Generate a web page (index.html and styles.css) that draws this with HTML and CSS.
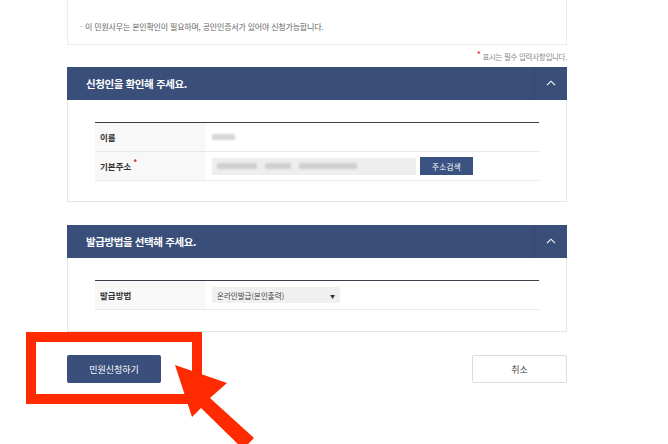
FILE: index.html
```html
<!DOCTYPE html>
<html lang="ko">
<head>
<meta charset="utf-8">
<link rel="stylesheet" href="styles.css">
</head>
<body>
<div class="page">
  <div class="notice"><span class="dot">·</span> 이 민원사무는 본인확인이 필요하며, 공인인증서가 있어야 신청가능합니다.</div>
  <div class="req"><span class="star">*</span> 표시는 필수 입력사항입니다.</div>

  <section class="panel">
    <div class="panel-head">
      <h2 class="panel-title">신청인을 확인해 주세요.</h2>
      <div class="toggle"><svg width="10" height="6" viewBox="0 0 10 6"><path d="M1 5.2 L5 1.2 L9 5.2" fill="none" stroke="#ffffff" stroke-width="1.1"/></svg></div>
    </div>
    <div class="panel-body">
      <div class="tbl">
        <div class="row">
          <div class="th">이름</div>
          <div class="td"><span class="blur blur-name"></span></div>
        </div>
        <div class="row">
          <div class="th">기본주소<span class="sup">*</span></div>
          <div class="td">
            <div class="addr">
              <span class="blur b1"></span><span class="blur b2"></span><span class="blur b3"></span>
            </div>
            <button class="btn-search">주소검색</button>
          </div>
        </div>
      </div>
    </div>
  </section>

  <section class="panel panel2">
    <div class="panel-head">
      <h2 class="panel-title">발급방법을 선택해 주세요.</h2>
      <div class="toggle"><svg width="10" height="6" viewBox="0 0 10 6"><path d="M1 5.2 L5 1.2 L9 5.2" fill="none" stroke="#ffffff" stroke-width="1.1"/></svg></div>
    </div>
    <div class="panel-body">
      <div class="tbl">
        <div class="row">
          <div class="th">발급방법</div>
          <div class="td">
            <div class="select"><span>온라인발급(본인출력)</span><span class="caret">▼</span></div>
          </div>
        </div>
      </div>
    </div>
  </section>

  <div class="actions">
    <button class="btn-apply">민원신청하기</button>
    <button class="btn-cancel">취소</button>
  </div>
</div>

<div class="highlight"></div>
<svg class="arrow" width="100" height="90" viewBox="0 0 100 90">
  <polygon points="5,5 57,23 40,38 84,78 73,89 31,48 22,57" fill="#ff2a00"/>
</svg>
</body>
</html>
```

FILE: styles.css
```css
* { box-sizing: border-box; }
html, body { margin: 0; padding: 0; background: #ffffff; }
body {
  font-family: "Noto Sans CJK KR", "Noto Sans", sans-serif;
  color: #333;
  width: 668px;
  height: 444px;
  overflow: hidden;
  position: relative;
}
.page {
  margin-left: 67px;
  width: 500px;
}
.notice {
  height: 45px;
  border: 1px solid #ececec;
  border-top: none;
  padding: 20px 0 0 12px;
  font-size: 8px;
  line-height: 14px;
  color: #666;
  letter-spacing: -0.2px;
}
.notice .dot { color: #aaa; margin-right: 1px; }
.req {
  text-align: right;
  font-size: 7.5px;
  line-height: 12px;
  color: #888;
  margin-top: 6px;
  height: 16px;
  letter-spacing: -0.3px;
}
.req .star { color: #d8182a; font-size: 9px; position: relative; top: -2px; }

.panel-head {
  height: 33px;
  background: #394e78;
  display: flex;
  align-items: center;
  justify-content: space-between;
}
.panel-title {
  margin: 0;
  padding-left: 19px;
  font-size: 10.5px;
  font-weight: 700;
  color: #ffffff;
  letter-spacing: -0.4px;
}
.toggle {
  width: 33px;
  height: 33px;
  border-left: 1px solid #34486f;
  display: flex;
  align-items: center;
  justify-content: center;
}
.toggle svg { display: block; margin-top: -1px; }
.panel-body {
  border: 1px solid #e6e6e6;
  border-top: none;
  padding: 22px 27px 20px 27px;
}
.panel2 { margin-top: 23px; }
.panel2 .panel-body { padding-bottom: 21px; }

.tbl { border-top: 1px solid #3a3f4a; }
.row {
  display: flex;
  height: 29px;
  border-bottom: 1px solid #e9e9e9;
}
.th {
  width: 111px;
  background: #f8f8f8;
  padding-left: 5px;
  font-size: 8.5px;
  font-weight: 700;
  color: #333;
  display: flex;
  align-items: center;
}
.sup { color: #d8182a; font-size: 8px; position: relative; top: -5px; margin-left: 2px; }
.td {
  flex: 1;
  display: flex;
  align-items: center;
  padding-left: 6px;
}
.blur {
  display: inline-block;
  height: 6px;
  background: #cfcfcf;
  filter: blur(1px);
  border-radius: 1px;
}
.blur-name { width: 23px; background: #d6d6d6; }
.addr {
  width: 204px;
  height: 17px;
  background: #eeeeee;
  display: flex;
  align-items: center;
  padding-left: 5px;
  gap: 8px;
}
.addr .b1 { width: 40px; }
.addr .b2 { width: 26px; }
.addr .b3 { width: 58px; }
.btn-search {
  margin-left: 4px;
  width: 53px;
  height: 18px;
  border: none;
  background: #3a5282;
  color: #fff;
  font-family: inherit;
  font-size: 7.5px;
  padding: 0;
  letter-spacing: 0.3px;
}
.select {
  width: 128px;
  height: 16px;
  background: #f0f0f0;
  display: flex;
  align-items: center;
  justify-content: space-between;
  padding: 0 5px 0 5px;
  font-size: 7.5px;
  color: #444;
}
.caret { font-size: 5px; color: #333; }

.actions {
  margin-top: 23px;
  display: flex;
  justify-content: space-between;
}
.btn-apply {
  width: 94px;
  height: 28px;
  border: none;
  border-radius: 2px;
  background: #3a4f7b;
  color: #fff;
  font-family: inherit;
  font-size: 9px;
  padding: 0;
}
.btn-cancel {
  width: 95px;
  height: 28px;
  border: 1px solid #dcdcdc;
  border-radius: 2px;
  background: #fff;
  color: #444;
  font-family: inherit;
  font-size: 9px;
  padding: 0;
}

.highlight {
  position: absolute;
  left: 26px;
  top: 332px;
  width: 176px;
  height: 72px;
  border: 10px solid #ff2a00;
}
.arrow {
  position: absolute;
  left: 170px;
  top: 360px;
  overflow: visible;
}
```
